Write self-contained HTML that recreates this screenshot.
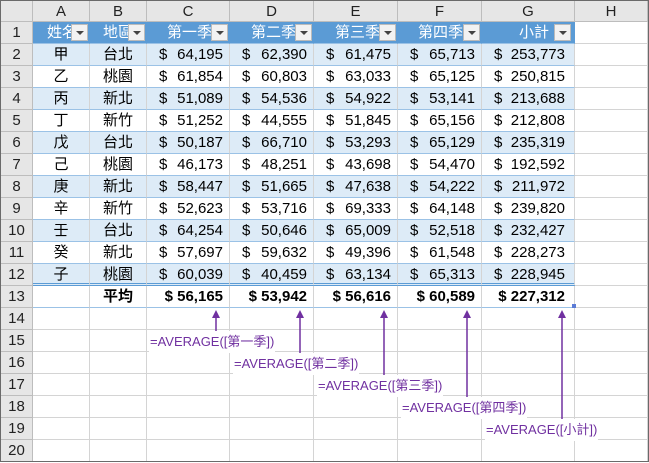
<!DOCTYPE html>
<html><head><meta charset="utf-8"><style>
*{box-sizing:border-box;margin:0;padding:0}
body{width:649px;height:463px;background:#fff;overflow:hidden;font-family:"Liberation Sans","Noto Sans CJK TC",sans-serif;font-size:15px;color:#000}
#wrap{position:absolute;left:0;top:0;width:649px;height:462px;border:1px solid #6a6a6a;overflow:hidden}
#g{display:grid;grid-template-columns:32px 57px 57px 83px 84px 84px 84px 93px 73px;grid-template-rows:21px repeat(20,22px)}
#g>div{border-right:1px solid #d4d4d4;border-bottom:1px solid #d4d4d4;line-height:21px;white-space:nowrap;overflow:hidden;position:relative}
#g>.h{background:#e6e6e6;border-color:#bdbdbd;text-align:center;color:#222}
.hd{background:#5b9bd5;color:#fff;border-color:#5b9bd5!important;border-bottom-color:#9bc2e6!important}
.b{background:#ddebf7}
.t{border-bottom-color:#9bc2e6!important;border-right-color:#d4d4d4}
.c{text-align:center}
.m{display:flex;justify-content:space-between;padding:0 6px 0 12px}
.tot{font-weight:bold;text-align:right;padding-right:6px}
.dd{position:absolute;right:1px;top:2px;width:17px;height:17px;background:#f2f2f2;border:1px solid #bbb}
.dd:after{content:"";position:absolute;left:4px;top:6px;border-left:4px solid transparent;border-right:4px solid transparent;border-top:4px solid #444}
.ht{position:absolute;top:0}
.r12{border-bottom:3px double #5b9bd5!important}
.lab{position:absolute;font-size:13px;color:#7030a0;line-height:22px;background:#fff;padding:0 1px}
</style></head><body><div id="wrap"><div id="g">
<div class="h"></div><div class="h">A</div><div class="h">B</div><div class="h">C</div><div class="h">D</div><div class="h">E</div><div class="h">F</div><div class="h">G</div><div class="h">H</div>

<div class="h">1</div><div class="hd"><span class="ht" style="left:14px">姓名</span><span class="dd"></span></div><div class="hd"><span class="ht" style="left:13px">地區</span><span class="dd"></span></div><div class="hd"><span class="ht" style="left:20px">第一季</span><span class="dd"></span></div><div class="hd"><span class="ht" style="left:21px">第二季</span><span class="dd"></span></div><div class="hd"><span class="ht" style="left:21px">第三季</span><span class="dd"></span></div><div class="hd"><span class="ht" style="left:20px">第四季</span><span class="dd"></span></div><div class="hd"><span class="ht" style="left:37px">小計</span><span class="dd" style="right:3px"></span></div><div></div>

<div class="h">2</div><div class="b t c">甲</div><div class="b t c">台北</div><div class="b t m"><span>$</span><span>64,195</span></div><div class="b t m"><span>$</span><span>62,390</span></div><div class="b t m"><span>$</span><span>61,475</span></div><div class="b t m"><span>$</span><span>65,713</span></div><div class="b t m" style="padding-right:9px"><span>$</span><span>253,773</span></div><div></div>
<div class="h">3</div><div class="t c">乙</div><div class="t c">桃園</div><div class="t m"><span>$</span><span>61,854</span></div><div class="t m"><span>$</span><span>60,803</span></div><div class="t m"><span>$</span><span>63,033</span></div><div class="t m"><span>$</span><span>65,125</span></div><div class="t m" style="padding-right:9px"><span>$</span><span>250,815</span></div><div></div>
<div class="h">4</div><div class="b t c">丙</div><div class="b t c">新北</div><div class="b t m"><span>$</span><span>51,089</span></div><div class="b t m"><span>$</span><span>54,536</span></div><div class="b t m"><span>$</span><span>54,922</span></div><div class="b t m"><span>$</span><span>53,141</span></div><div class="b t m" style="padding-right:9px"><span>$</span><span>213,688</span></div><div></div>
<div class="h">5</div><div class="t c">丁</div><div class="t c">新竹</div><div class="t m"><span>$</span><span>51,252</span></div><div class="t m"><span>$</span><span>44,555</span></div><div class="t m"><span>$</span><span>51,845</span></div><div class="t m"><span>$</span><span>65,156</span></div><div class="t m" style="padding-right:9px"><span>$</span><span>212,808</span></div><div></div>
<div class="h">6</div><div class="b t c">戊</div><div class="b t c">台北</div><div class="b t m"><span>$</span><span>50,187</span></div><div class="b t m"><span>$</span><span>66,710</span></div><div class="b t m"><span>$</span><span>53,293</span></div><div class="b t m"><span>$</span><span>65,129</span></div><div class="b t m" style="padding-right:9px"><span>$</span><span>235,319</span></div><div></div>
<div class="h">7</div><div class="t c">己</div><div class="t c">桃園</div><div class="t m"><span>$</span><span>46,173</span></div><div class="t m"><span>$</span><span>48,251</span></div><div class="t m"><span>$</span><span>43,698</span></div><div class="t m"><span>$</span><span>54,470</span></div><div class="t m" style="padding-right:9px"><span>$</span><span>192,592</span></div><div></div>
<div class="h">8</div><div class="b t c">庚</div><div class="b t c">新北</div><div class="b t m"><span>$</span><span>58,447</span></div><div class="b t m"><span>$</span><span>51,665</span></div><div class="b t m"><span>$</span><span>47,638</span></div><div class="b t m"><span>$</span><span>54,222</span></div><div class="b t m" style="padding-right:9px"><span>$</span><span>211,972</span></div><div></div>
<div class="h">9</div><div class="t c">辛</div><div class="t c">新竹</div><div class="t m"><span>$</span><span>52,623</span></div><div class="t m"><span>$</span><span>53,716</span></div><div class="t m"><span>$</span><span>69,333</span></div><div class="t m"><span>$</span><span>64,148</span></div><div class="t m" style="padding-right:9px"><span>$</span><span>239,820</span></div><div></div>
<div class="h">10</div><div class="b t c">壬</div><div class="b t c">台北</div><div class="b t m"><span>$</span><span>64,254</span></div><div class="b t m"><span>$</span><span>50,646</span></div><div class="b t m"><span>$</span><span>65,009</span></div><div class="b t m"><span>$</span><span>52,518</span></div><div class="b t m" style="padding-right:9px"><span>$</span><span>232,427</span></div><div></div>
<div class="h">11</div><div class="t c">癸</div><div class="t c">新北</div><div class="t m"><span>$</span><span>57,697</span></div><div class="t m"><span>$</span><span>59,632</span></div><div class="t m"><span>$</span><span>49,396</span></div><div class="t m"><span>$</span><span>61,548</span></div><div class="t m" style="padding-right:9px"><span>$</span><span>228,273</span></div><div></div>
<div class="h">12</div><div class="b t c r12">子</div><div class="b t c r12">桃園</div><div class="b t m r12"><span>$</span><span>60,039</span></div><div class="b t m r12"><span>$</span><span>40,459</span></div><div class="b t m r12"><span>$</span><span>63,134</span></div><div class="b t m r12"><span>$</span><span>65,313</span></div><div class="b t m r12" style="padding-right:9px"><span>$</span><span>228,945</span></div><div></div>
<div class="h">13</div><div class="t"></div><div class="t c" style="font-weight:bold">平均</div><div class="t tot">$ 56,165</div><div class="t tot">$ 53,942</div><div class="t tot">$ 56,616</div><div class="t tot">$ 60,589</div><div class="t tot" style="padding-right:9px">$ 227,312</div><div></div>
<div class="h">14</div><div></div><div></div><div></div><div></div><div></div><div></div><div></div><div></div>
<div class="h">15</div><div></div><div></div><div></div><div></div><div></div><div></div><div></div><div></div>
<div class="h">16</div><div></div><div></div><div></div><div></div><div></div><div></div><div></div><div></div>
<div class="h">17</div><div></div><div></div><div></div><div></div><div></div><div></div><div></div><div></div>
<div class="h">18</div><div></div><div></div><div></div><div></div><div></div><div></div><div></div><div></div>
<div class="h">19</div><div></div><div></div><div></div><div></div><div></div><div></div><div></div><div></div>
<div class="h">20</div><div></div><div></div><div></div><div></div><div></div><div></div><div></div><div></div>
</div>
<div class="lab" style="left:148px;top:330px">=AVERAGE([第一季])</div>
<div class="lab" style="left:232px;top:352px">=AVERAGE([第二季])</div>
<div class="lab" style="left:316px;top:374px">=AVERAGE([第三季])</div>
<div class="lab" style="left:400px;top:396px">=AVERAGE([第四季])</div>
<div class="lab" style="left:484px;top:418px">=AVERAGE([小計])</div>
<svg width="649" height="463" style="position:absolute;left:-1px;top:-1px" fill="#7030a0" stroke="#7030a0">
<path d="M216 316V331M300 316V353M384 316V375M467 316V397M562 316V419" stroke-width="1.5"/>
<path d="M212 318L216 310L220 318ZM296 318L300 310L304 318ZM380 318L384 310L388 318ZM463 318L467 310L471 318ZM558 318L562 310L566 318Z" stroke="none"/>
<rect x="572" y="304" width="4" height="4" fill="#5b7bd5" stroke="none"/>
</svg>
</div></body></html>
